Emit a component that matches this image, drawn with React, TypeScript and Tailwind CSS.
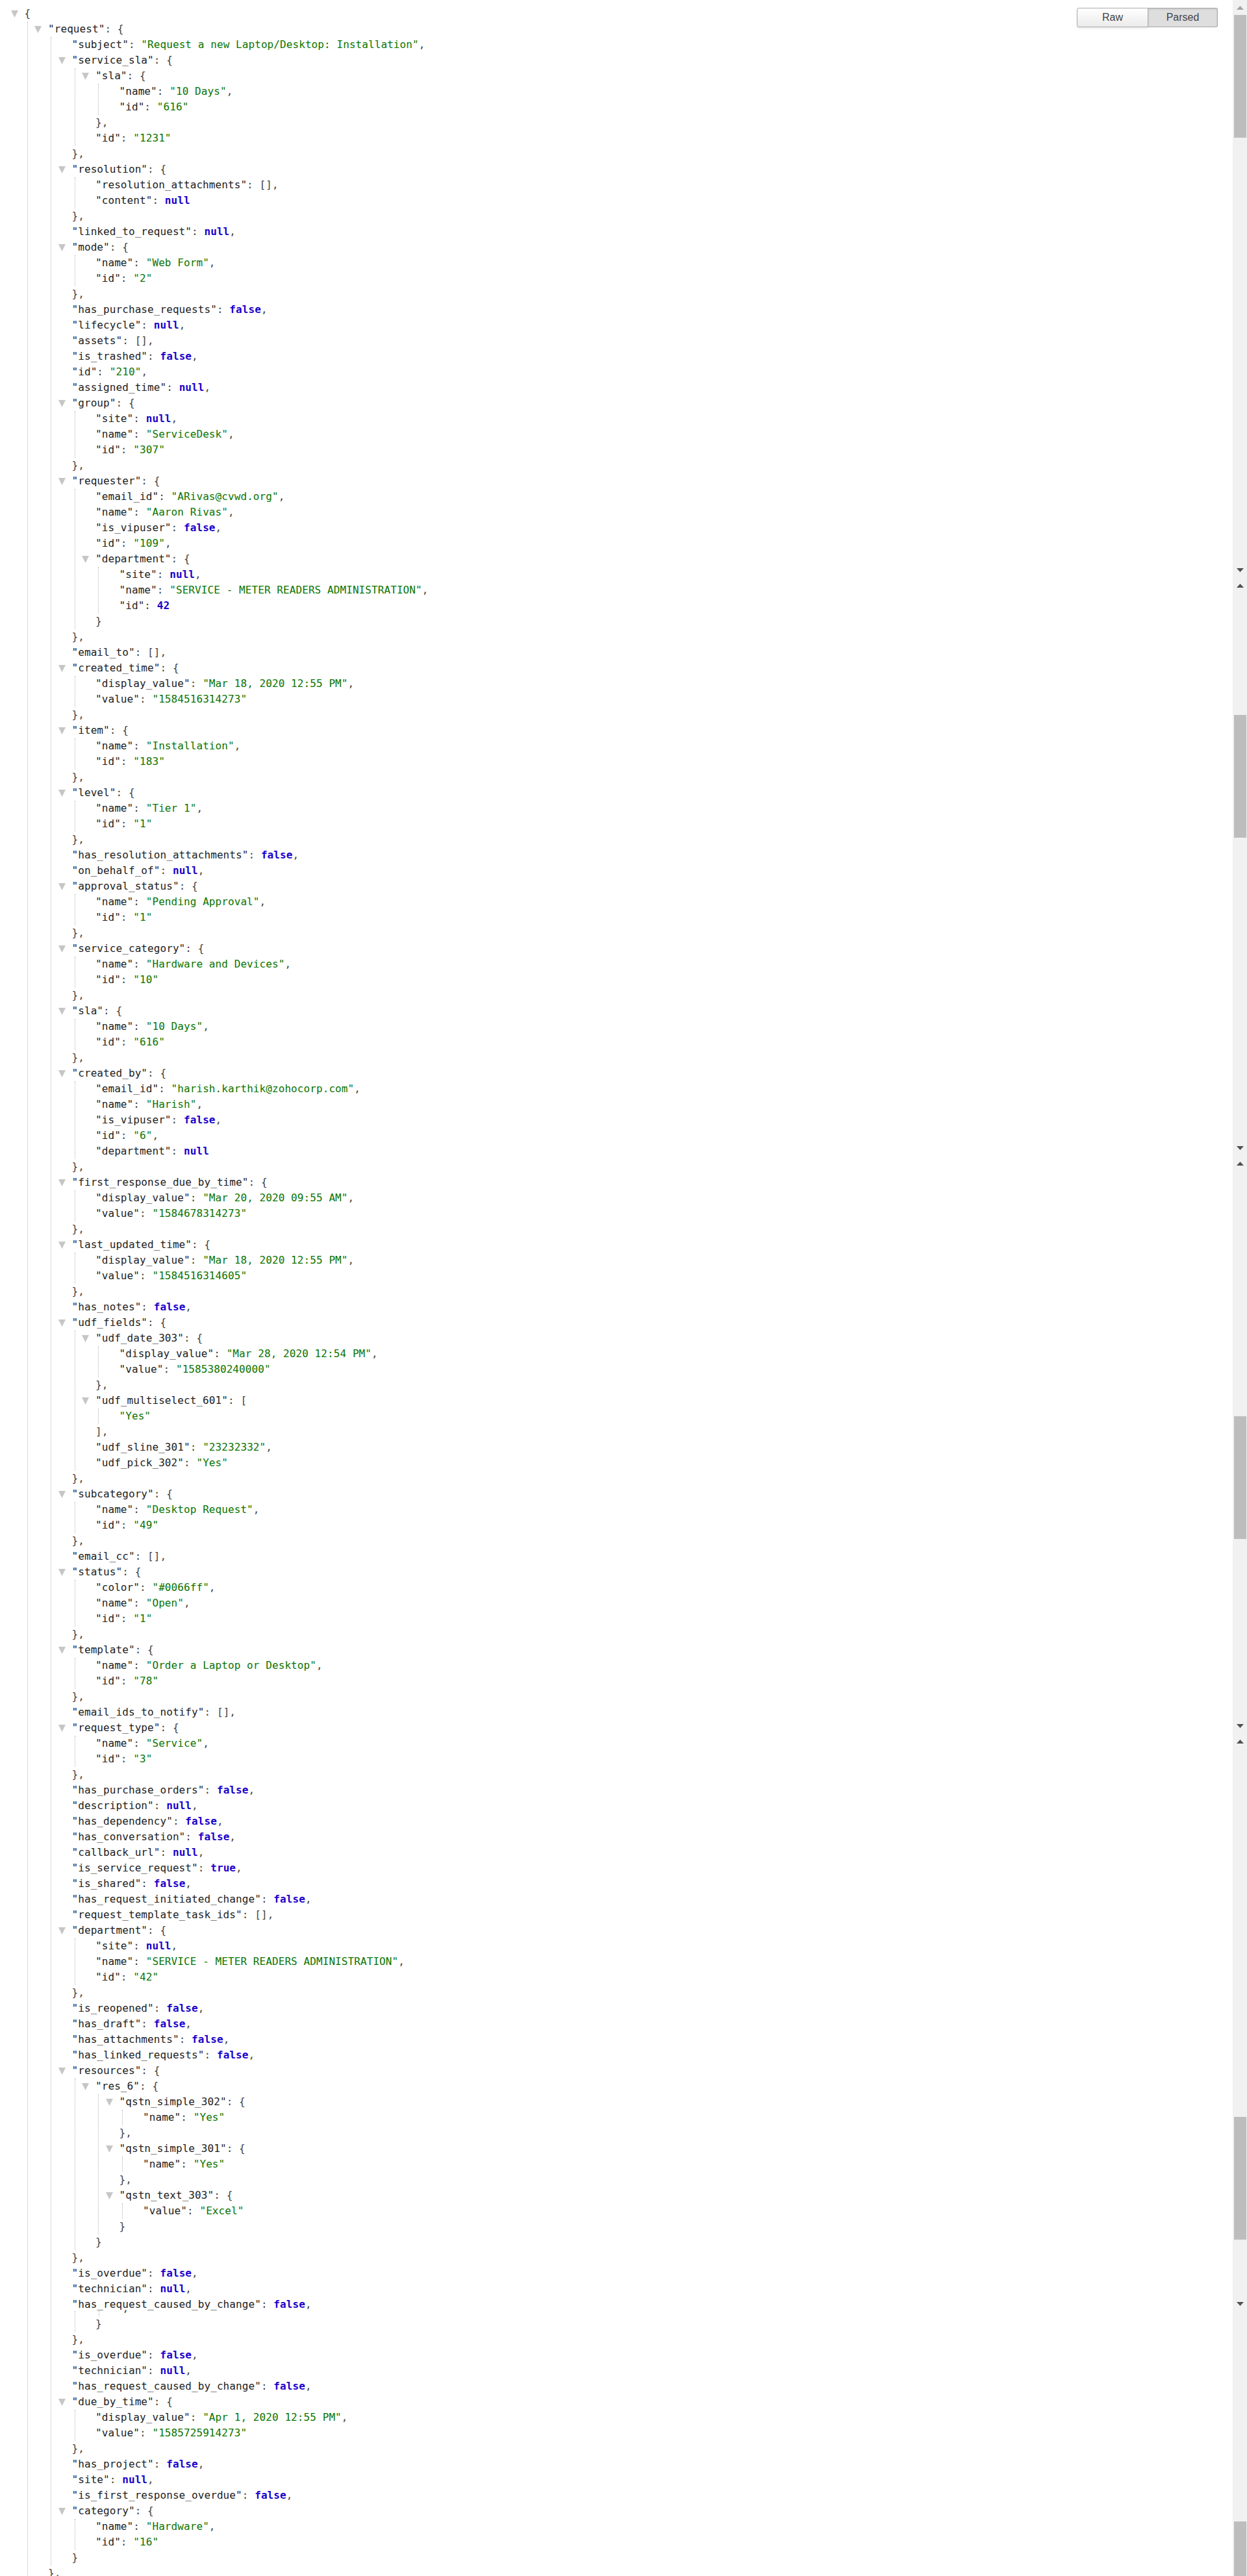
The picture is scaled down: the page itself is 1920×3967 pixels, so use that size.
const SOURCE = `{
  "request": {
    "subject": "Request a new Laptop/Desktop: Installation",
    "service_sla": {
      "sla": {
        "name": "10 Days",
        "id": "616"
      },
      "id": "1231"
    },
    "resolution": {
      "resolution_attachments": [],
      "content": null
    },
    "linked_to_request": null,
    "mode": {
      "name": "Web Form",
      "id": "2"
    },
    "has_purchase_requests": false,
    "lifecycle": null,
    "assets": [],
    "is_trashed": false,
    "id": "210",
    "assigned_time": null,
    "group": {
      "site": null,
      "name": "ServiceDesk",
      "id": "307"
    },
    "requester": {
      "email_id": "ARivas@cvwd.org",
      "name": "Aaron Rivas",
      "is_vipuser": false,
      "id": "109",
      "department": {
        "site": null,
        "name": "SERVICE - METER READERS ADMINISTRATION",
        "id": 42
      }
    },
    "email_to": [],
    "created_time": {
      "display_value": "Mar 18, 2020 12:55 PM",
      "value": "1584516314273"
    },
    "item": {
      "name": "Installation",
      "id": "183"
    },
    "level": {
      "name": "Tier 1",
      "id": "1"
    },
    "has_resolution_attachments": false,
    "on_behalf_of": null,
    "approval_status": {
      "name": "Pending Approval",
      "id": "1"
    },
    "service_category": {
      "name": "Hardware and Devices",
      "id": "10"
    },
    "sla": {
      "name": "10 Days",
      "id": "616"
    },
    "created_by": {
      "email_id": "harish.karthik@zohocorp.com",
      "name": "Harish",
      "is_vipuser": false,
      "id": "6",
      "department": null
    },
    "first_response_due_by_time": {
      "display_value": "Mar 20, 2020 09:55 AM",
      "value": "1584678314273"
    },
    "last_updated_time": {
      "display_value": "Mar 18, 2020 12:55 PM",
      "value": "1584516314605"
    },
    "has_notes": false,
    "udf_fields": {
      "udf_date_303": {
        "display_value": "Mar 28, 2020 12:54 PM",
        "value": "1585380240000"
      },
      "udf_multiselect_601": [
        "Yes"
      ],
      "udf_sline_301": "23232332",
      "udf_pick_302": "Yes"
    },
    "subcategory": {
      "name": "Desktop Request",
      "id": "49"
    },
    "email_cc": [],
    "status": {
      "color": "#0066ff",
      "name": "Open",
      "id": "1"
    },
    "template": {
      "name": "Order a Laptop or Desktop",
      "id": "78"
    },
    "email_ids_to_notify": [],
    "request_type": {
      "name": "Service",
      "id": "3"
    },
    "has_purchase_orders": false,
    "description": null,
    "has_dependency": false,
    "has_conversation": false,
    "callback_url": null,
    "is_service_request": true,
    "is_shared": false,
    "has_request_initiated_change": false,
    "request_template_task_ids": [],
    "department": {
      "site": null,
      "name": "SERVICE - METER READERS ADMINISTRATION",
      "id": "42"
    },
    "is_reopened": false,
    "has_draft": false,
    "has_attachments": false,
    "has_linked_requests": false,
    "resources": {
      "res_6": {
        "qstn_simple_302": {
          "name": "Yes"
        },
        "qstn_simple_301": {
          "name": "Yes"
        },
        "qstn_text_303": {
          "value": "Excel"
        }
      }
    },
    "is_overdue": false,
    "technician": null,
    "has_request_caused_by_change": false,
      }#seam
    },
    "is_overdue": false,
    "technician": null,
    "has_request_caused_by_change": false,
    "due_by_time": {
      "display_value": "Apr 1, 2020 12:55 PM",
      "value": "1585725914273"
    },
    "has_project": false,
    "site": null,
    "is_first_response_overdue": false,
    "category": {
      "name": "Hardware",
      "id": "16"
    }
  },`;

interface Line {
  level: number;
  text: string;
  seam: boolean;
}

// The screenshot was stitched from scrolled captures, hence the odd "seam" row
const LINES: Line[] = SOURCE.split('\n').map(raw => {
  const seam = raw.endsWith('#seam');
  const clean = seam ? raw.replace('#seam', '') : raw;
  const text = clean.trimStart();
  return { level: (clean.length - text.length) / 2, text, seam };
});

function Value({ value }: { value: string }) {
  if (value.startsWith('"')) return <span className="text-[#0b7500]">{value}</span>;
  if (/^(null|true|false|\d+)$/.test(value)) {
    return <span className="font-bold text-[#1a01cc]">{value}</span>;
  }
  return <span>{value}</span>;
}

function Row({ line }: { line: Line }) {
  const match = line.text.match(/^(?:("[^"]*")(: ))?(.*?)(,?)$/);
  const [, key, colon, value, comma] = match as RegExpMatchArray;
  const opens = value === '{' || value === '[';

  return (
    <div className="relative h-6 leading-6 whitespace-pre">
      {opens && (
        <svg width="11" height="11" viewBox="0 0 11 11" className="absolute -left-[21px] top-[7px]">
          <polygon points="0,0 11,0 5.5,11" fill="#c6c6c6" />
        </svg>
      )}
      {key && <span className="text-[#222]">{key}</span>}
      {colon}
      <Value value={value} />
      {comma}
    </div>
  );
}

function Block({ lines, level }: { lines: Line[]; level: number }) {
  const out: React.ReactNode[] = [];
  let i = 0;
  while (i < lines.length) {
    if (lines[i].level === level) {
      out.push(<Row key={i} line={lines[i]} />);
      i += 1;
      continue;
    }
    let j = i;
    while (j < lines.length && lines[j].level > level) j += 1;
    const group = lines.slice(i, j);
    const seam = group[0].seam;
    out.push(
      <div
        key={i}
        className={
          seam
            ? 'relative ml-1 -mt-[2px] border-l border-dotted border-[#b5b5b5] pl-[31.5px] pt-2'
            : 'ml-1 border-l border-dotted border-[#b5b5b5] pl-[31.5px]'
        }
      >
        {seam && (
          <>
            <div className="absolute left-[36px] top-0 h-2 border-l border-dotted border-[#b5b5b5]" />
            <div className="absolute left-[73px] -top-[16px] h-5 overflow-hidden leading-6">,</div>
          </>
        )}
        <Block lines={group} level={level + 1} />
      </div>,
    );
    i = j;
  }
  return <>{out}</>;
}

function Arrow({ up, dark }: { up?: boolean; dark?: boolean }) {
  return (
    <svg width="11" height="6" viewBox="0 0 11 6" className="mx-auto block shrink-0">
      <polygon points={up ? '5.5,0 11,6 0,6' : '0,0 11,0 5.5,6'} fill={dark ? '#505050' : '#a3a3a3'} />
    </svg>
  );
}

function ToggleBar() {
  return (
    <div className="absolute right-[23px] top-3 flex h-[30px] w-[217px] text-base tracking-normal text-[#444] font-['Liberation_Sans',Arial,sans-serif]">
      <div className="flex w-[110px] items-center justify-center rounded-l-[3px] border border-[#aaa] bg-gradient-to-b from-white to-[#ebebeb] shadow-[0_2px_3px_rgba(0,0,0,0.08)]">
        Raw
      </div>
      <div className="flex flex-1 items-center justify-center rounded-r-[3px] border border-l-0 border-[#aaa] bg-[#dedede] shadow-[inset_0_1px_3px_rgba(0,0,0,0.15)]">
        Parsed
      </div>
    </div>
  );
}

function Scrollbar() {
  return (
    <aside className="flex w-[22px] shrink-0 flex-col bg-[#f1f1f1]">
      <div className="flex h-[890px] flex-col pt-[9px]">
        <Arrow up />
        <div className="ml-[2px] mt-2 h-[189px] w-[19px] bg-[#bdbdbd]" />
        <div className="flex-1" />
        <Arrow dark />
        <div className="h-[9px]" />
      </div>
      <div className="flex h-[890px] flex-col pt-[9px]">
        <Arrow up dark />
        <div className="ml-[2px] mt-[196px] h-[189px] w-[19px] bg-[#bdbdbd]" />
        <div className="flex-1" />
        <Arrow dark />
        <div className="h-[9px]" />
      </div>
      <div className="flex h-[890px] flex-col pt-[9px]">
        <Arrow up dark />
        <div className="ml-[2px] mt-[386px] h-[189px] w-[19px] bg-[#bdbdbd]" />
        <div className="flex-1" />
        <Arrow dark />
        <div className="h-[9px]" />
      </div>
      <div className="flex h-[890px] flex-col pt-[9px]">
        <Arrow up dark />
        <div className="ml-[2px] mt-[575px] h-[189px] w-[19px] bg-[#bdbdbd]" />
        <div className="flex-1" />
        <Arrow dark />
        <div className="h-[9px]" />
      </div>
      <div className="pt-[323px]">
        <div className="ml-[2px] h-[84px] w-[19px] bg-[#bdbdbd]" />
      </div>
    </aside>
  );
}

export default function App() {
  return (
    <div className="flex h-[3967px] overflow-hidden bg-white">
      <main className="relative min-w-0 flex-1 pl-[37.5px] pt-[9px] font-['DejaVu_Sans_Mono',monospace] text-base tracking-[0.08px] text-[#444]">
        <ToggleBar />
        <Block lines={LINES} level={0} />
      </main>
      <Scrollbar />
    </div>
  );
}
